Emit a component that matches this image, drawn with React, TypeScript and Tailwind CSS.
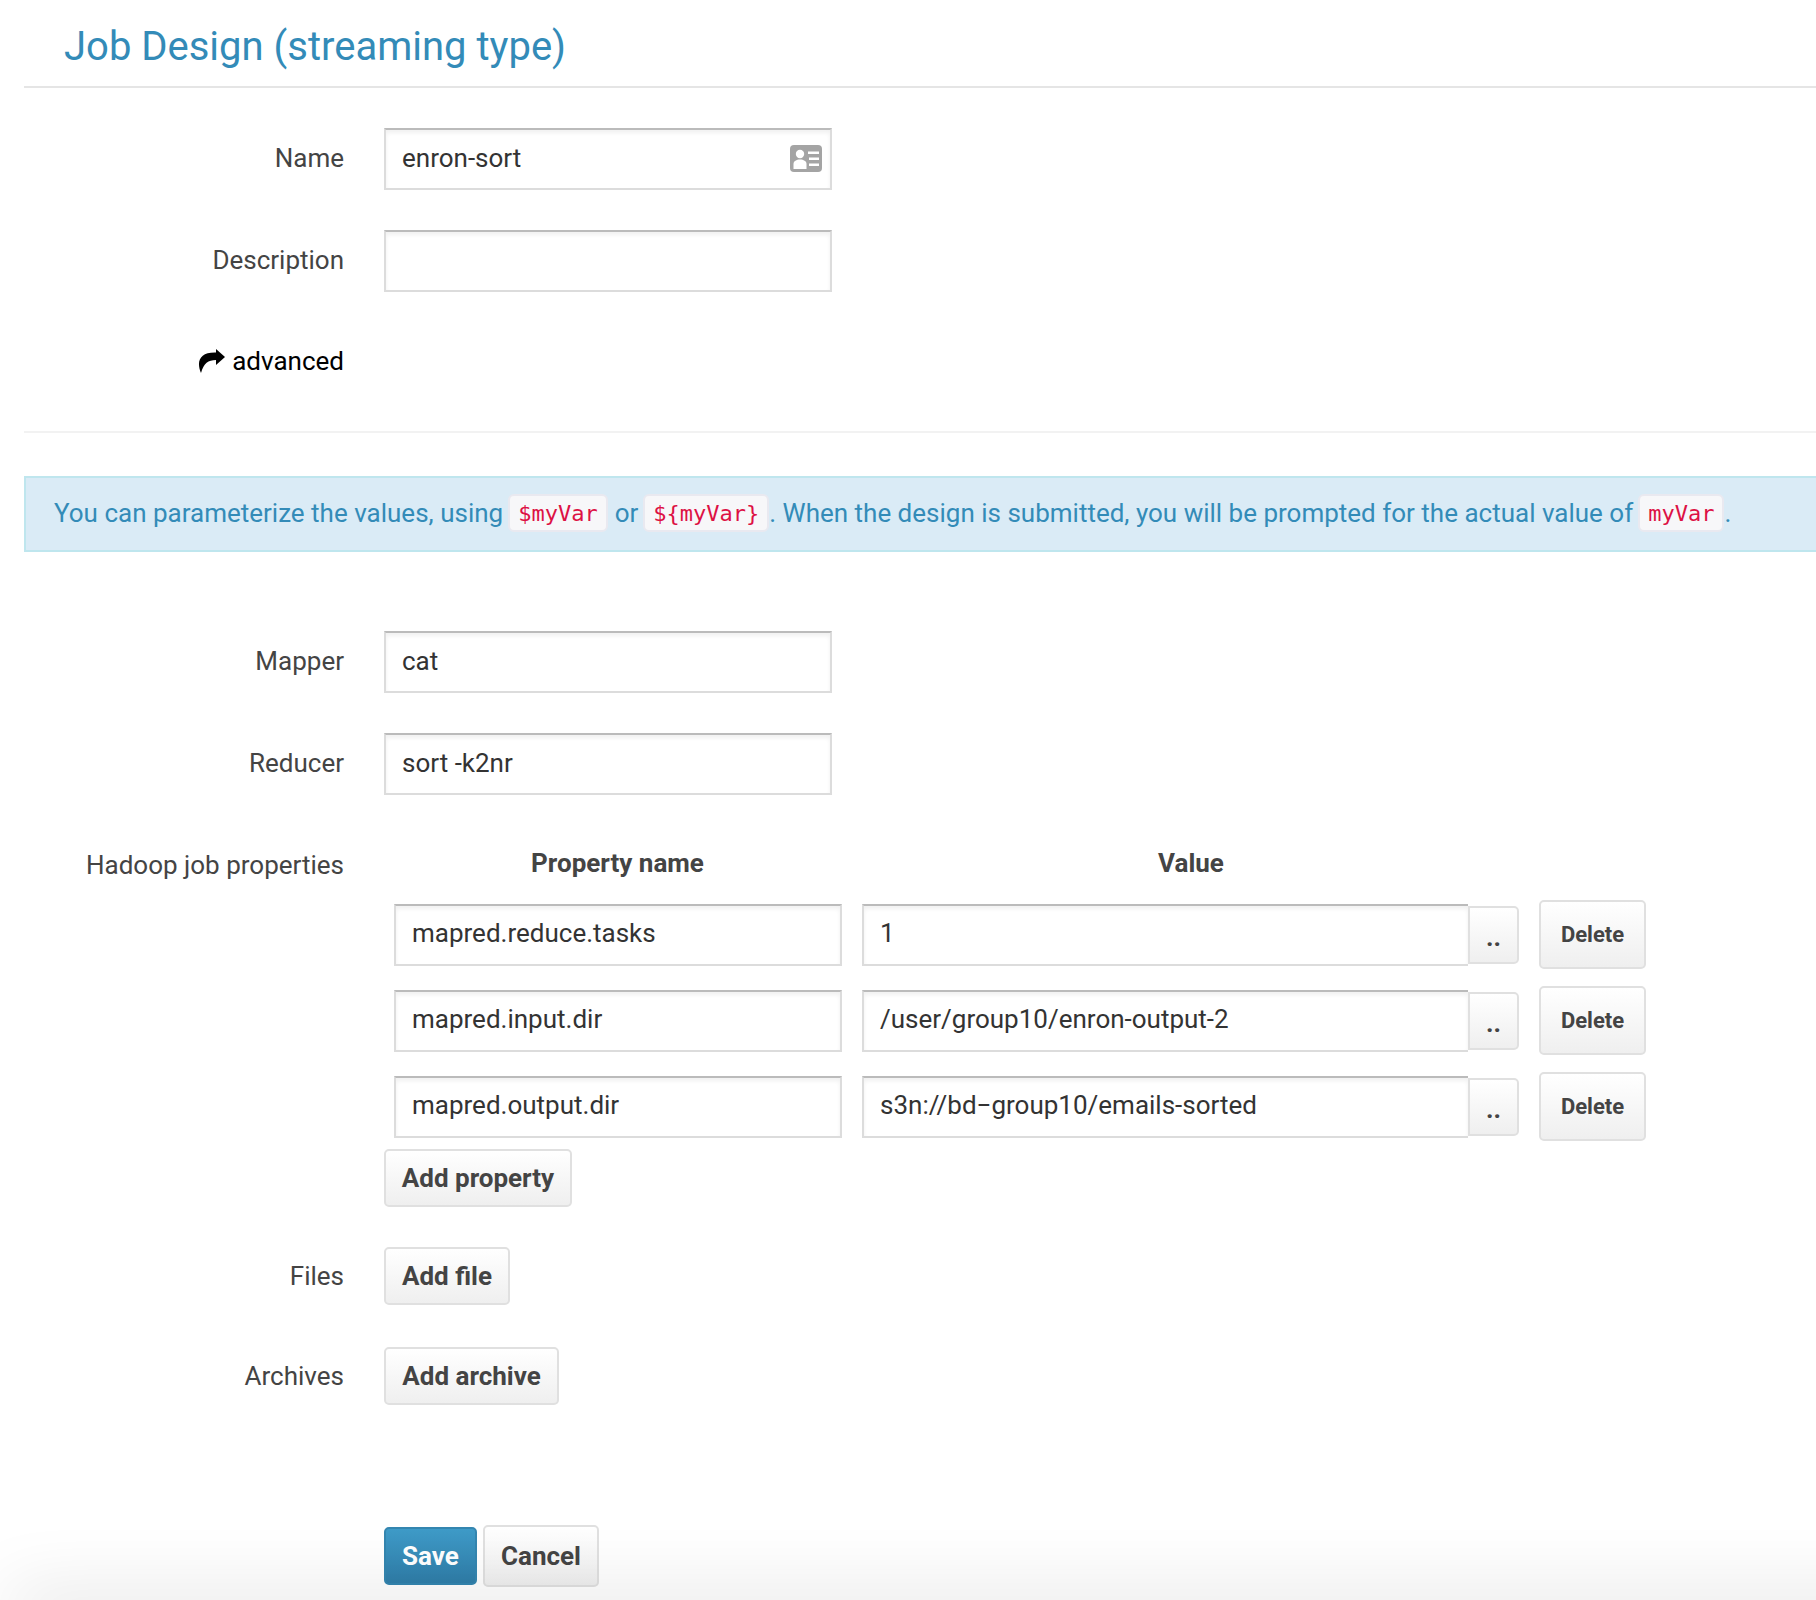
const textInput =
  "h-[62px] flex items-center px-4 pb-[2px] text-[#333] text-[26px] bg-white border-2 border-[#dcdcdc] border-t-[#bbbbbb] shadow-[inset_0_3px_4px_rgba(0,0,0,0.06)] whitespace-nowrap";
const btn =
  "flex items-center justify-center border-2 border-[#e0e0e0] rounded-[5px] bg-linear-to-b from-white to-[#efefef] text-[#444] font-bold whitespace-nowrap";

const properties = [
  { name: "mapred.reduce.tasks", value: "1" },
  { name: "mapred.input.dir", value: "/user/group10/enron-output-2" },
  { name: "mapred.output.dir", value: "s3n://bd−group10/emails-sorted" },
];

function Label({ children }: { children: React.ReactNode }) {
  return (
    <div className="w-[320px] shrink-0 text-right text-[26px] text-[#444] whitespace-nowrap">
      {children}
    </div>
  );
}

function Field({ label, value, icon }: { label: string; value?: string; icon?: boolean }) {
  return (
    <div className="flex items-center gap-10 mb-10">
      <div className="pb-[2px]">
        <Label>{label}</Label>
      </div>
      <div className={`${textInput} w-[448px] justify-between pr-[8px]`}>
        <span>{value}</span>
        {icon && <CardIcon />}
      </div>
    </div>
  );
}

function CardIcon() {
  return (
    <svg width="32" height="27" viewBox="0 0 32 27">
      <rect width="32" height="27" rx="4" fill="#a4a4a4" />
      <circle cx="10" cy="9" r="4.2" fill="#fff" />
      <path d="M3.5 24v-5c0-3 3-4.500 6.500-4.500s6.500 1.500 6.500 4.500v5z" fill="#fff" />
      <path d="M18 6.500h11v2.500H18zM19 12.500h10v2.500H19zM19 18.500h10v2.500H19z" fill="#fff" />
    </svg>
  );
}

function ShareIcon() {
  return (
    <svg width="27" height="24" viewBox="0 0 27 24" className="shrink-0">
      <path d="M18 0l9 8-9 8v-5C10 11 6 14 3 24-2 12 2 3 18 3.500z" fill="#000" />
    </svg>
  );
}

function Code({ children }: { children: string }) {
  return (
    <code className="inline-flex items-center h-[38px] px-[8px] ml-[5px] mr-[7px] border-2 border-[#e9e9f0] rounded-[6px] bg-[#f7f7f9] text-[#dd1144] text-[22px] font-['DejaVu_Sans_Mono',monospace]">
      {children}
    </code>
  );
}

export default function App() {
  return (
    <div className="relative w-[1816px] h-[1600px] overflow-hidden bg-white pl-6 font-['Roboto',sans-serif]">
      <div className="h-[88px] border-b-2 border-[#e5e5e5] pl-10 pt-2 flex items-center">
        <h1 className="text-[40px] font-normal text-[#338bb8] whitespace-nowrap">Job Design (streaming type)</h1>
      </div>

      <div className="mt-10">
        <Field label="Name" value="enron-sort" icon />
        <Field label="Description" />
        <div className="flex items-center justify-end w-[320px] h-[62px] -mt-[2px] gap-[7px] text-[26px] text-black">
          <ShareIcon />
          <span>advanced</span>
        </div>
      </div>

      <div className="mt-[39px] border-t-2 border-[#f2f2f2]" />

      <div className="mt-[43px] h-[76px] flex items-center pl-[28px] pb-[2px] border-2 border-r-0 border-[#bfe6ee] bg-[#daebf6] text-[26px] text-[#338bb8] whitespace-nowrap">
        <span>You can parameterize the values, using</span>
        <Code>$myVar</Code>
        <span>or</span>
        <Code>{"${myVar}"}</Code>
        <span className="-ml-[7px]">. When the design is submitted, you will be prompted for the actual value of</span>
        <Code>myVar</Code>
        <span className="-ml-[7px]">.</span>
      </div>

      <div className="mt-[79px]">
        <Field label="Mapper" value="cat" />
        <Field label="Reducer" value="sort -k2nr" />

        <div className="flex items-start gap-10">
          <div className="pt-[11px]">
            <Label>Hadoop job properties</Label>
          </div>
          <div>
            <div className="flex h-[56px] mb-[9px] ml-[10px] items-center text-[26px] font-bold text-[#444]">
              <div className="w-[447px] text-center">Property name</div>
              <div className="w-[656px] ml-[22px] text-center">Value</div>
            </div>
            <div className="flex flex-col gap-[17px] ml-[10px]">
              {properties.map((p) => (
                <div key={p.name} className="flex items-center">
                  <div className={`${textInput} w-[448px]`}>{p.name}</div>
                  <div className={`${textInput} w-[606px] ml-5 border-r-0`}>{p.value}</div>
                  <div className={`${btn} w-[51px] h-[58px] text-[26px] pt-[6px] rounded-l-none`}>..</div>
                  <div className={`${btn} w-[107px] h-[69px] ml-5 text-[22px]`}>Delete</div>
                </div>
              ))}
            </div>
            <div className={`${btn} w-[188px] h-[58px] mt-2 text-[26px]`}>Add property</div>
          </div>
        </div>

        <div className="flex items-center gap-10 mt-10">
          <Label>Files</Label>
          <div className={`${btn} w-[126px] h-[58px] text-[26px]`}>Add file</div>
        </div>
        <div className="flex items-center gap-10 mt-[42px]">
          <Label>Archives</Label>
          <div className={`${btn} w-[175px] h-[58px] text-[26px]`}>Add archive</div>
        </div>

        <div className="flex items-center gap-[6px] ml-[360px] mt-[120px]">
          <div className="flex items-center justify-center w-[93px] h-[58px] rounded-[5px] border-2 border-[#3486b0] bg-linear-to-b from-[#3f9bc8] to-[#2f7ea9] text-white text-[26px] font-bold">
            Save
          </div>
          <div className={`${btn} w-[116px] h-[62px] text-[26px]`}>Cancel</div>
        </div>
      </div>

      {/* soft shadow rising from the bottom edge of the page */}
      <div className="absolute left-[10px] -right-[100px] top-full h-5 shadow-[0_0_70px_rgba(0,0,0,0.22)] pointer-events-none" />
    </div>
  );
}
